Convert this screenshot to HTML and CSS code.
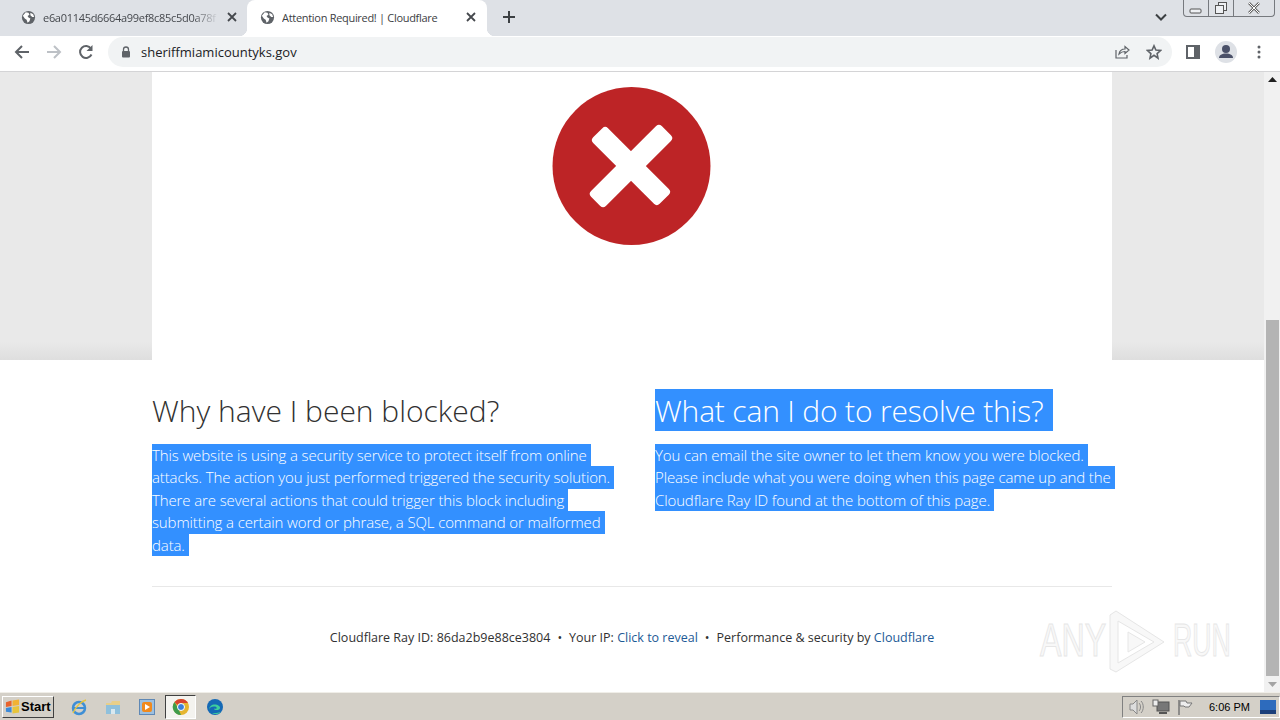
FILE: index.html
```html
<!DOCTYPE html>
<html>

<head>
    <title>Attention Required! | Cloudflare</title>
    <link rel="stylesheet" href="styles.css">
</head>

<body>
    <!-- browser tabs -->
    <div class="tabstrip">
        <div class="tab">
            <svg class="globe" viewBox="0 0 16 16"><circle cx="8" cy="8" r="7" fill="#5f6368"/><path d="M2 6l3-3.500 3 .5 1 2-2 1.500 1 1.500 2 1-1 3-2 1.500-1-3-2-1.500zM10 3l3 1.500 1 3-2 0-2-2z" fill="#fff"/></svg>
            <span class="tabTitle fade">e6a01145d6664a99ef8c85c5d0a78f</span>
            <svg class="tabClose" viewBox="0 0 10 10"><path d="M1 1l8 8M9 1L1 9" stroke="#45484d" stroke-width="1.800"/></svg>
        </div>
        <div class="tab active">
            <svg class="globe" viewBox="0 0 16 16"><circle cx="8" cy="8" r="7" fill="#5f6368"/><path d="M2 6l3-3.500 3 .5 1 2-2 1.500 1 1.500 2 1-1 3-2 1.500-1-3-2-1.500zM10 3l3 1.500 1 3-2 0-2-2z" fill="#fff"/></svg>
            <span class="tabTitle">Attention Required! | Cloudflare</span>
            <svg class="tabClose" viewBox="0 0 10 10"><path d="M1 1l8 8M9 1L1 9" stroke="#45484d" stroke-width="1.800"/></svg>
        </div>
        <svg class="newTab" viewBox="0 0 14 14"><path d="M7 1v12M1 7h12" stroke="#3c4043" stroke-width="2"/></svg>
        <div class="stripRight">
            <svg class="tabMenu" viewBox="0 0 12 8"><path d="M1 1.500l5 5 5-5" fill="none" stroke="#3c4043" stroke-width="2"/></svg>
            <div class="winControls">
                <span class="winBtn"><svg class="minIcon" width="14" height="6" viewBox="0 0 14 6"><rect x="1" y="1" width="11" height="4" rx="1" fill="#eef0f3" stroke="#555"/></svg></span>
                <span class="winBtn"><svg width="14" height="14" viewBox="0 0 14 14"><rect x="4.500" y="1.500" width="8" height="8" fill="#eef0f3" stroke="#555"/><rect x="1.500" y="4.500" width="8" height="8" fill="#eef0f3" stroke="#555"/></svg></span>
                <span class="winBtn wide"><svg width="14" height="12" viewBox="0 0 14 12"><path d="M2 1l10 10M12 1L2 11" stroke="#666" stroke-width="2.500"/><path d="M2 1l10 10M12 1L2 11" stroke="#fff" stroke-width="1"/></svg></span>
            </div>
        </div>
    </div>

    <!-- address bar -->
    <div class="toolbar">
        <svg class="navIcon" viewBox="0 0 16 16"><path d="M15 8H2M8 2L2 8l6 6" fill="none" stroke="#5f6368" stroke-width="2"/></svg>
        <svg class="navIcon" viewBox="0 0 16 16"><path d="M1 8h13M8 2l6 6-6 6" fill="none" stroke="#bdc1c6" stroke-width="2"/></svg>
        <svg class="navIcon" viewBox="0 0 16 16"><path d="M13.500 10.500A6 6 0 1 1 13 4.500" fill="none" stroke="#5f6368" stroke-width="2"/><path d="M14.500 1v6h-6z" fill="#5f6368"/></svg>
        <div class="omnibox">
            <svg class="lock" viewBox="0 0 10 12"><path d="M2.500 5V3.500a2.500 2.500 0 0 1 5 0V5" fill="none" stroke="#5f6368" stroke-width="1.300"/><rect x="1" y="5" width="8" height="6.500" rx="1" fill="#5f6368"/></svg>
            <span class="url">sheriffmiamicountyks.gov</span>
            <svg class="omniIcon" viewBox="0 0 16 16"><path d="M2 6v8h11v-3" fill="none" stroke="#5f6368" stroke-width="1.200"/><path d="M5 10c.5-3 3-5 6-5V2.500L15 6l-4 3.500V7.500c-2.500 0-4.500 1-6 2.500z" fill="none" stroke="#5f6368" stroke-width="1.200"/></svg>
            <svg class="omniIcon star" viewBox="0 0 16 16"><path d="M8 1.800l1.900 4.200 4.600.5-3.400 3.100.9 4.500L8 11.300l-4 2.800.9-4.500L1.500 6.500l4.600-.5z" fill="none" stroke="#5f6368" stroke-width="1.600"/></svg>
        </div>
        <svg class="sideIcon" viewBox="0 0 14 14"><rect x="1" y="1" width="12" height="12" fill="#fff" stroke="#5f6368" stroke-width="2"/><rect x="8" y="1" width="5" height="12" fill="#5f6368"/></svg>
        <div class="avatar">
            <svg width="22" height="22" viewBox="0 0 22 22"><circle cx="11" cy="8" r="4" fill="#4a5068"/><path d="M4 17c0-3 3-4.500 7-4.500s7 1.500 7 4.500z" fill="#4a5068"/></svg>
        </div>
        <svg class="dots" viewBox="0 0 4 14"><circle cx="2" cy="2" r="1.500" fill="#5f6368"/><circle cx="2" cy="7" r="1.500" fill="#5f6368"/><circle cx="2" cy="12" r="1.500" fill="#5f6368"/></svg>
    </div>

    <!-- page -->
    <div class="viewport">
        <div class="page">
            <div class="hero">
                <div class="heroInner">
                    <svg class="errorIcon" viewBox="0 0 160 160">
                        <circle cx="80.500" cy="80" r="79" fill="#bd2426"/>
                        <rect x="30" y="69.500" width="100" height="21" rx="4" fill="#fff" transform="rotate(-45 80 80)"/>
                        <rect x="33" y="69.500" width="94" height="21" rx="4" fill="#fff" transform="rotate(45 80 80)"/>
                    </svg>
                </div>
            </div>
            <div class="content">
                <div class="columns">
                    <div>
                        <h2 class="heading">Why have I been blocked?</h2>
                        <p class="copy">
                            <span class="sel">This website is using a security service to protect itself from online</span>
                            <span class="sel">attacks. The action you just performed triggered the security solution.</span>
                            <span class="sel">There are several actions that could trigger this block including</span>
                            <span class="sel">submitting a certain word or phrase, a SQL command or malformed</span>
                            <span class="sel">data.</span>
                        </p>
                    </div>
                    <div>
                        <h2 class="heading"><span class="sel headSel">What can I do to resolve this?</span></h2>
                        <p class="copy">
                            <span class="sel">You can email the site owner to let them know you were blocked.</span>
                            <span class="sel">Please include what you were doing when this page came up and the</span>
                            <span class="sel">Cloudflare Ray ID found at the bottom of this page.</span>
                        </p>
                    </div>
                </div>
                <div class="footer">
                    <span>Cloudflare Ray ID: 86da2b9e88ce3804</span>
                    <span class="bullet">&bull;</span>
                    <span>Your IP: <a href="#">Click to reveal</a></span>
                    <span class="bullet">&bull;</span>
                    <span>Performance &amp; security by <a href="#">Cloudflare</a></span>
                </div>
            </div>
            <svg class="watermark" width="200" height="66" viewBox="0 0 200 66">
                <text class="markText" transform="translate(2 47) scale(.7 1)">ANY</text>
                <path class="markShape" d="M72 6v54l6 3 48-30-48-31zM80 12l36 21-36 21z"/>
                <path class="markShape" d="M90 23l17 10-17 10z"/>
                <text class="markText" transform="translate(135 47) scale(.58 1)">RUN</text>
            </svg>
        </div>
        <div class="scrollbar">
            <svg class="scrollArrow" viewBox="0 0 16 16"><path d="M4 10l4.500-5 4.500 5z" fill="#202020"/></svg>
            <div class="scrollSpace"></div>
            <div class="scrollThumb"></div>
            <svg class="scrollArrow" viewBox="0 0 16 16"><path d="M4 6l4.500 5 4.500-5z" fill="#a3a3a3"/></svg>
        </div>
    </div>

    <!-- windows taskbar -->
    <div class="taskbar">
        <div class="startBtn">
            <svg width="15" height="15" viewBox="0 0 16 15"><path d="M1 3l6-2v6l-6 1z" fill="#e8632c"/><path d="M8 1l7-1v6l-7 1z" fill="#f2b233"/><path d="M1 9l6-1v6l-6-1z" fill="#3c8ad9"/><path d="M8 8l7-1v7l-7 1z" fill="#e8c53a"/></svg>
            <span>Start</span>
        </div>
        <div class="quick">
            <span class="quickItem"><svg width="18" height="18" viewBox="0 0 18 18"><circle cx="9" cy="10" r="6" fill="none" stroke="#3f8fd6" stroke-width="2.500"/><path d="M4 10h10" stroke="#3f8fd6" stroke-width="2"/><path d="M3 15C6 8 12 3 16 2" fill="none" stroke="#e8c53a" stroke-width="1.300"/></svg></span>
            <span class="quickItem"><svg width="18" height="18" viewBox="0 0 18 18"><path d="M2 5h5l1-2h8v4H2z" fill="#e8cf8a"/><rect x="2" y="7" width="14" height="9" fill="#8fc0dc"/><rect x="7" y="11" width="4" height="5" fill="#d9e8ef"/></svg></span>
            <span class="quickItem"><svg width="18" height="18" viewBox="0 0 18 18"><rect x="1.500" y="1.500" width="15" height="15" fill="#9cc0e0" stroke="#5f88b5"/><rect x="4" y="4" width="10" height="10" rx="2" fill="#f08a1d"/><path d="M7 6l5 3-5 3z" fill="#fff"/></svg></span>
            <span class="quickItem current"><svg width="18" height="18" viewBox="0 0 18 18"><circle cx="9" cy="9" r="8" fill="#e5b52f"/><path d="M9 1a8 8 0 0 1 7 4H9a4 4 0 0 0-3.500 2L2.500 4A8 8 0 0 1 9 1z" fill="#d8432f"/><path d="M2.500 4L6 10l3 7a8 8 0 0 1-6.500-13z" fill="#3f9b4b"/><circle cx="9" cy="9" r="3.500" fill="#3a7fdc" stroke="#fff"/></svg></span>
            <span class="quickItem"><svg width="18" height="18" viewBox="0 0 18 18"><circle cx="9" cy="9" r="8" fill="#1569b5"/><path d="M3 12c0-5 6-7 10-4 2 1.500 1 4-2 4-2 0-3-.5-3-1.500 3 1 4-1 1-2-3-.5-6 1-6 3.500z" fill="#3ecf9c"/><path d="M6 15c3 2 7 1 9-1-3 1-6 1-9 1z" fill="#3ecf9c"/></svg></span>
        </div>
        <div class="tray">
            <svg width="18" height="16" viewBox="0 0 18 16"><path d="M2 5h3l4-4v14l-4-4H2z" fill="#ddd" stroke="#888"/><path d="M11 4c2 2 2 6 0 8M13 2c3 3 3 9 0 12" fill="none" stroke="#888"/></svg>
            <svg width="18" height="16" viewBox="0 0 18 16"><rect x="5" y="3" width="12" height="9" fill="#777" stroke="#555"/><rect x="1" y="1" width="5" height="6" fill="#eee" stroke="#666"/><path d="M7 14h8" stroke="#555" stroke-width="2"/></svg>
            <svg width="18" height="16" viewBox="0 0 18 16"><path d="M3 1v15" stroke="#777" stroke-width="1.500"/><path d="M4 2h6l1 2h5l-3 4H9L8 7H4z" fill="#eee" stroke="#777"/></svg>
            <span class="clock">6:06 PM</span>
            <svg width="16" height="14" viewBox="0 0 16 14"><rect width="16" height="14" fill="#2d6bbd"/><rect y="10" width="16" height="4" fill="#1b3f7a"/></svg>
        </div>
    </div>
</body>

</html>
```

FILE: styles.css
```css
html,
body {
    margin: 0;
    height: 100%;
    overflow: hidden;
}

body {
    display: flex;
    flex-direction: column;
    font-family: "Open Sans", "Noto Sans", sans-serif;
    color: #313131;
    background-color: white;
}

/* tabs */

.tabstrip {
    height: 36px;
    flex: none;
    display: flex;
    align-items: flex-end;
    padding-left: 7px;
    background-color: #dee1e6;
}

.tab {
    width: 240px;
    height: 34px;
    box-sizing: border-box;
    display: flex;
    align-items: center;
    padding: 0 10px 4px 14px;
    font-size: 11px;
    letter-spacing: -0.300px;
    color: #45484d;
}

.tab.active {
    position: relative;
    height: 36px;
    padding: 0 11px 2px 13px;
    background-color: white;
    border-radius: 8px 8px 0 0;
    color: #3c4043;
}

.tab.active::before,
.tab.active::after {
    content: "";
    position: absolute;
    bottom: 0;
    width: 8px;
    height: 8px;
}

.tab.active::before {
    left: -8px;
    background: radial-gradient(circle at 0 0, transparent 8px, white 8.500px);
}

.tab.active::after {
    right: -8px;
    background: radial-gradient(circle at 100% 0, transparent 8px, white 8.500px);
}

.globe {
    width: 15px;
    height: 15px;
    flex: none;
    margin-right: 7px;
}

.tabTitle {
    flex: 1;
    white-space: nowrap;
    overflow: hidden;
}

.fade {
    -webkit-mask-image: linear-gradient(to right, black 85%, transparent);
    mask-image: linear-gradient(to right, black 85%, transparent);
}

.tabClose {
    width: 10px;
    height: 10px;
    flex: none;
    margin-left: 8px;
}

.newTab {
    width: 14px;
    height: 14px;
    margin: 0 0 12px 15px;
}

.stripRight {
    margin-left: auto;
    align-self: stretch;
    display: flex;
    padding-right: 5px;
}

.tabMenu {
    width: 12px;
    height: 8px;
    margin: 13px 16px 0 0;
}

.winControls {
    display: flex;
    height: 16px;
    border: 1px solid #76797e;
    border-top: 0;
    border-radius: 0 0 4px 4px;
}

.winBtn {
    width: 25px;
    box-sizing: border-box;
    display: flex;
    align-items: center;
    justify-content: center;
    border-right: 1px solid #76797e;
}

.winBtn.wide {
    width: 40px;
    border-right: 0;
}

.minIcon {
    margin-top: 6px;
}

/* address bar */

.toolbar {
    height: 36px;
    flex: none;
    box-sizing: border-box;
    display: flex;
    align-items: center;
    padding: 0 0 3px 14px;
    border-bottom: 1px solid #d4d4d6;
    background-color: white;
}

.navIcon {
    width: 16px;
    height: 16px;
    margin-right: 16px;
}

.omnibox {
    width: 1064px;
    height: 30px;
    margin-left: -2px;
    box-sizing: border-box;
    display: flex;
    align-items: center;
    padding: 0 10px 0 13px;
    border-radius: 15px;
    background-color: #f1f3f4;
}

.lock {
    width: 10px;
    height: 12px;
    margin-right: 10px;
}

.url {
    flex: 1;
    font-size: 13px;
    color: #202124;
}

.omniIcon {
    width: 16px;
    height: 16px;
    margin-left: 16px;
}

.sideIcon {
    width: 14px;
    height: 14px;
    margin-left: 14px;
}

.avatar {
    width: 22px;
    height: 22px;
    margin-left: 15px;
    border-radius: 50%;
    background-color: #dee1e6;
}

.dots {
    width: 4px;
    height: 14px;
    margin-left: 20px;
}

/* page */

.viewport {
    flex: 1;
    min-height: 0;
    display: flex;
}

.page {
    flex: 1;
    position: relative;
    overflow: hidden;
}

.hero {
    height: 288px;
    background: linear-gradient(to bottom, #e9e9e9 270px, #dedede);
}

.heroInner {
    width: 960px;
    height: 288px;
    margin: 0 auto;
    box-sizing: border-box;
    padding: 14px 2px 0 0;
    display: flex;
    justify-content: center;
    background-color: white;
}

.errorIcon {
    width: 160px;
    height: 160px;
}

.content {
    width: 960px;
    margin: 0 auto;
}

.columns {
    display: grid;
    grid-template-columns: 503px 457px;
    height: 226px;
    border-bottom: 1px solid #e8e8e8;
}

.heading {
    margin: 31px 0 12.750px;
    font-size: 30px;
    line-height: 40px;
    font-weight: 300;
}

.copy {
    margin: 0;
    font-size: 15px;
    line-height: 22.500px;
    font-weight: 300;
    letter-spacing: -0.120px;
}

.sel {
    display: block;
    width: fit-content;
    padding-right: 4px;
    white-space: nowrap;
    background-color: #3390ff;
    color: white;
}

.headSel {
    margin-top: -2px;
    padding: 2px 10px 0 0;
    letter-spacing: -0.170px;
}

.footer {
    display: flex;
    justify-content: center;
    gap: 7px;
    padding-top: 41px;
    font-size: 12.500px;
    line-height: 20px;
}

.footer a {
    color: #1d5a96;
    text-decoration: none;
}

.watermark {
    position: absolute;
    left: 1038px;
    top: 537px;
}

.markText {
    font-family: "Liberation Sans", sans-serif;
    font-size: 46px;
    fill: #f8f8f8;
    stroke: #e6e6e6;
}

.markShape {
    fill: #f8f8f8;
    stroke: #e6e6e6;
    fill-rule: evenodd;
}

/* scrollbar */

.scrollbar {
    width: 16px;
    flex: none;
    display: flex;
    flex-direction: column;
    background-color: #f1f1f1;
}

.scrollArrow {
    width: 16px;
    height: 16px;
    flex: none;
}

.scrollSpace {
    height: 232px;
    flex: none;
}

.scrollThumb {
    flex: 1;
    margin: 0 1px 0 2px;
    background-color: #b4b4b4;
}

/* taskbar */

.taskbar {
    height: 28px;
    flex: none;
    box-sizing: border-box;
    display: flex;
    align-items: center;
    border-top: 1px solid #f0eee8;
    background-color: #d4d0c8;
    font-family: "Liberation Sans", sans-serif;
}

.startBtn {
    width: 52px;
    height: 22px;
    margin-left: 2px;
    box-sizing: border-box;
    display: flex;
    align-items: center;
    gap: 1px;
    padding-left: 2px;
    border: 1px solid;
    border-color: #fff #404040 #404040 #fff;
    font-size: 13px;
    font-weight: bold;
    color: black;
}

.quick {
    display: flex;
    margin-left: 8px;
}

.quickItem {
    width: 34px;
    height: 24px;
    box-sizing: border-box;
    display: flex;
    align-items: center;
    justify-content: center;
}

.quickItem.current {
    width: 31px;
    margin: 0 2px 0 1px;
    border: 1px solid;
    border-color: #404040 #fff #fff #404040;
    background-color: #f4f3ef;
}

.tray {
    margin-left: auto;
    width: 158px;
    height: 22px;
    box-sizing: border-box;
    display: flex;
    align-items: center;
    gap: 6px;
    padding-left: 5px;
    border: 1px solid;
    border-color: #808080 #fff #fff #808080;
    font-size: 11px;
    color: black;
}

.clock {
    margin: 0 4px 0 9px;
    white-space: nowrap;
}
```
